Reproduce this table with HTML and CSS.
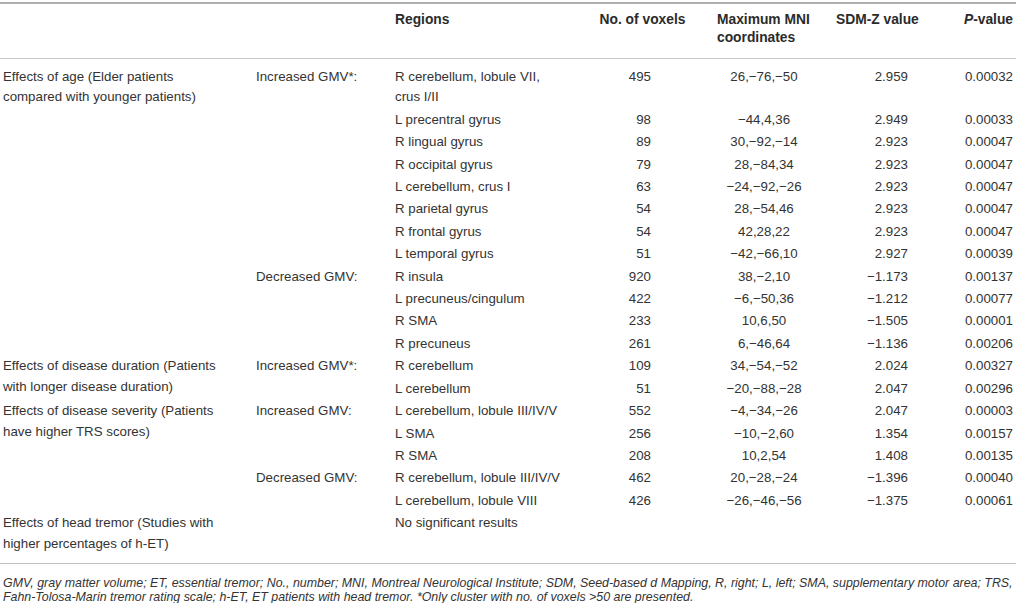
FILE: index.html
```html
<!DOCTYPE html>
<html>
<head>
<meta charset="utf-8">
<link rel="stylesheet" href="styles.css">
</head>
<body>
<div class="wrap">
<table class="tbl">
<colgroup>
<col class="c1"><col class="c2"><col class="c3"><col class="c4"><col class="c5"><col class="c6"><col class="c7">
</colgroup>
<thead>
<tr>
<th></th><th></th>
<th class="reg">Regions</th>
<th class="num-h">No. of voxels</th>
<th class="mni-h">Maximum MNI coordinates</th>
<th class="z-h">SDM-Z value</th>
<th class="p-h"><i>P</i>-value</th>
</tr>
</thead>
<tbody>
<tr class="first"><td class="g">Effects of age (Elder patients compared with younger patients)</td><td>Increased GMV*:</td><td class="r">R cerebellum, lobule VII, crus I/II</td><td class="n">495</td><td class="m">26,−76,−50</td><td class="z">2.959</td><td class="p">0.00032</td></tr>
<tr><td></td><td></td><td class="r">L precentral gyrus</td><td class="n">98</td><td class="m">−44,4,36</td><td class="z">2.949</td><td class="p">0.00033</td></tr>
<tr><td></td><td></td><td class="r">R lingual gyrus</td><td class="n">89</td><td class="m">30,−92,−14</td><td class="z">2.923</td><td class="p">0.00047</td></tr>
<tr><td></td><td></td><td class="r">R occipital gyrus</td><td class="n">79</td><td class="m">28,−84,34</td><td class="z">2.923</td><td class="p">0.00047</td></tr>
<tr><td></td><td></td><td class="r">L cerebellum, crus I</td><td class="n">63</td><td class="m">−24,−92,−26</td><td class="z">2.923</td><td class="p">0.00047</td></tr>
<tr><td></td><td></td><td class="r">R parietal gyrus</td><td class="n">54</td><td class="m">28,−54,46</td><td class="z">2.923</td><td class="p">0.00047</td></tr>
<tr><td></td><td></td><td class="r">R frontal gyrus</td><td class="n">54</td><td class="m">42,28,22</td><td class="z">2.923</td><td class="p">0.00047</td></tr>
<tr><td></td><td></td><td class="r">L temporal gyrus</td><td class="n">51</td><td class="m">−42,−66,10</td><td class="z">2.927</td><td class="p">0.00039</td></tr>
<tr><td></td><td>Decreased GMV:</td><td class="r">R insula</td><td class="n">920</td><td class="m">38,−2,10</td><td class="z">−1.173</td><td class="p">0.00137</td></tr>
<tr><td></td><td></td><td class="r">L precuneus/cingulum</td><td class="n">422</td><td class="m">−6,−50,36</td><td class="z">−1.212</td><td class="p">0.00077</td></tr>
<tr><td></td><td></td><td class="r">R SMA</td><td class="n">233</td><td class="m">10,6,50</td><td class="z">−1.505</td><td class="p">0.00001</td></tr>
<tr><td></td><td></td><td class="r">R precuneus</td><td class="n">261</td><td class="m">6,−46,64</td><td class="z">−1.136</td><td class="p">0.00206</td></tr>
<tr><td class="g" rowspan="2">Effects of disease duration (Patients with longer disease duration)</td><td>Increased GMV*:</td><td class="r">R cerebellum</td><td class="n">109</td><td class="m">34,−54,−52</td><td class="z">2.024</td><td class="p">0.00327</td></tr>
<tr><td></td><td class="r">L cerebellum</td><td class="n">51</td><td class="m">−20,−88,−28</td><td class="z">2.047</td><td class="p">0.00296</td></tr>
<tr><td class="g" rowspan="2">Effects of disease severity (Patients have higher TRS scores)</td><td>Increased GMV:</td><td class="r">L cerebellum, lobule III/IV/V</td><td class="n">552</td><td class="m">−4,−34,−26</td><td class="z">2.047</td><td class="p">0.00003</td></tr>
<tr><td></td><td class="r">L SMA</td><td class="n">256</td><td class="m">−10,−2,60</td><td class="z">1.354</td><td class="p">0.00157</td></tr>
<tr><td></td><td></td><td class="r">R SMA</td><td class="n">208</td><td class="m">10,2,54</td><td class="z">1.408</td><td class="p">0.00135</td></tr>
<tr><td></td><td>Decreased GMV:</td><td class="r">R cerebellum, lobule III/IV/V</td><td class="n">462</td><td class="m">20,−28,−24</td><td class="z">−1.396</td><td class="p">0.00040</td></tr>
<tr><td></td><td></td><td class="r">L cerebellum, lobule VIII</td><td class="n">426</td><td class="m">−26,−46,−56</td><td class="z">−1.375</td><td class="p">0.00061</td></tr>
<tr class="last"><td class="g">Effects of head tremor (Studies with higher percentages of h-ET)</td><td></td><td class="r">No significant results</td><td></td><td></td><td></td><td></td></tr>
</tbody>
</table>
<p class="foot">GMV, gray matter volume; ET, essential tremor; No., number; MNI, Montreal Neurological Institute; SDM, Seed-based d Mapping, R, right; L, left; SMA, supplementary motor area; TRS,<br>Fahn-Tolosa-Marin tremor rating scale; h-ET, ET patients with head tremor. *Only cluster with no. of voxels &gt;50 are presented.</p>
</div>
</body>
</html>
```

FILE: styles.css
```css
html, body {
  margin: 0;
  padding: 0;
  background: #fff;
}
.wrap {
  width: 1016px;
  font-family: "Liberation Sans", Arial, sans-serif;
  color: #333;
  font-size: 13.3px;
}
.tbl {
  width: 1016px;
  border-collapse: collapse;
  table-layout: fixed;
  margin-top: 2px;
  border-top: 2px solid #b0b0b0;
  border-bottom: 1px solid #bdbdbd;
}
.c1 { width: 253px; }
.c2 { width: 139px; }
.c3 { width: 198px; }
.c4 { width: 102px; }
.c5 { width: 141px; }
.c6 { width: 102px; }
.c7 { width: 81px; }
th, td {
  padding: 1px 0 1px 3px;
  vertical-align: top;
  line-height: 20.4px;
  text-align: left;
  font-weight: normal;
}
thead th {
  font-weight: bold;
  font-size: 13.8px;
  line-height: 17.5px;
  padding-top: 7px;
  padding-bottom: 12px;
  border-bottom: 1px solid #c8c8c8;
  color: #2b2b2b;
}
tbody tr.first td { padding-top: 8px; }
tbody tr.last td { padding-bottom: 9px; }
.g { padding-right: 25px; }
.r { padding-right: 23px; }
.num-h { text-align: center; }
.mni-h { text-align: left; padding-left: 25px; }
.z-h { text-align: left; }
.p-h { text-align: right; padding-right: 3px; }
.n { text-align: right; padding-right: 41px; }
.m { text-align: center; }
.z { text-align: right; padding-right: 27px; }
.p { text-align: right; padding-right: 3px; }
.foot {
  margin: 0;
  padding: 12px 0 0 3px;
  font-style: italic;
  font-size: 12.4px;
  line-height: 14.5px;
  white-space: nowrap;
  color: #333;
}
```
